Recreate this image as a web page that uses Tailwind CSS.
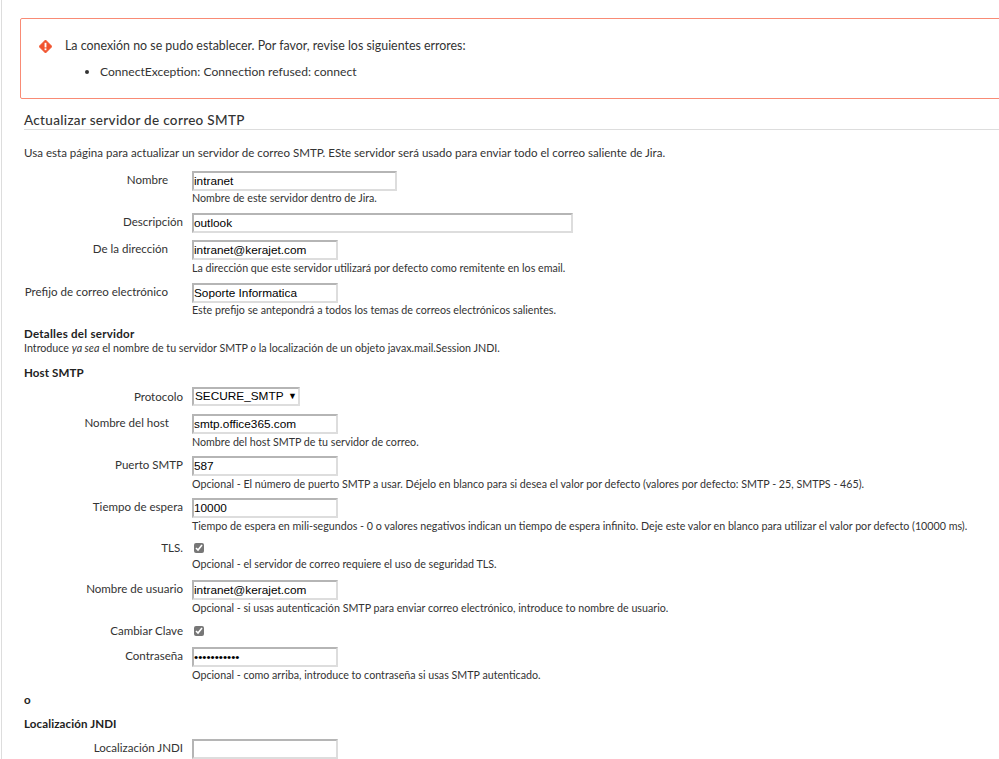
<!DOCTYPE html>
<html lang="es">
<head>
    <meta charset="UTF-8">
    <title>Actualizar servidor de correo SMTP</title>
    <script src="https://cdn.jsdelivr.net/npm/@tailwindcss/browser@4"></script>
</head>
<body class="bg-white overflow-hidden h-[759px] font-['Lato',sans-serif] text-[11.55px] text-[#333]">
<div class="ml-[1px] border-l border-[#ddd] h-[759px] pl-[18px] pt-[18px] overflow-hidden">
    <!-- Error -->
    <div class="w-[1000px] h-[81px] border border-[#f98b75] rounded-[2px] pl-[18px] pt-[17px] text-[12.4px]">
        <div class="flex items-center h-[20px]">
            <svg class="w-[13px] h-[13px] mr-[13px]" viewBox="0 0 14 14"><path d="M7 0 L14 7 L7 14 L0 7 Z" fill="#f1532e" stroke="#f1532e" stroke-linejoin="round"/><rect x="6" y="3" width="2" height="5" fill="#fff"/><rect x="6" y="9" width="2" height="2" fill="#fff"/></svg>
            <span>La conexión no se pudo establecer. Por favor, revise los siguientes errores:</span>
        </div>
        <ul class="list-disc ml-[61px] mt-[7px] text-[12.1px]"><li>ConnectException: Connection refused: connect</li></ul>
    </div>

    <div class="ml-[4px]">
        <h2 class="mt-[12px] h-[19px] border-b border-[#ddd] text-[13.5px] font-medium tracking-[0.32px] leading-[19px] text-[#333]">Actualizar servidor de correo SMTP</h2>
        <p class="mt-[14px] h-[18px] leading-[18px] whitespace-nowrap">Usa esta página para actualizar un servidor de correo SMTP. ESte servidor será usado para enviar todo el correo saliente de Jira.</p>

        <!-- Nombre -->
        <div class="mt-[9px] flex items-center h-[20px]">
            <label class="w-[168px] text-right pr-[24px] pb-[2px] shrink-0">Nombre</label>
            <input class="w-[205px] h-[20px] border-2 border-[#b5b5b5] border-r-[#ddd] border-b-[#ddd] text-[11.8px] font-['Liberation_Sans'] text-black" value="intranet">
        </div>
        <p class="ml-[168px] text-[10.7px] leading-[14px] h-[14px]">Nombre de este servidor dentro de Jira.</p>

        <div class="mt-[8px] flex items-center h-[20px]">
            <label class="w-[168px] text-right pr-[9px] pb-[3px] shrink-0 whitespace-nowrap">Descripción</label>
            <input class="w-[381px] h-[20px] border-2 border-[#b5b5b5] border-r-[#ddd] border-b-[#ddd] text-[11.8px] font-['Liberation_Sans'] text-black" value="outlook">
        </div>

        <div class="mt-[7px] flex items-center h-[20px]">
            <label class="w-[168px] text-right pr-[24px] pb-[2px] shrink-0 whitespace-nowrap">De la dirección</label>
            <input class="w-[146px] h-[20px] border-2 border-[#b5b5b5] border-r-[#ddd] border-b-[#ddd] text-[11.8px] font-['Liberation_Sans'] text-black" value="intranet@kerajet.com">
        </div>
        <p class="ml-[168px] text-[10.7px] leading-[14px] h-[14px] mt-[1px] whitespace-nowrap">La dirección que este servidor utilizará por defecto como remitente en los email.</p>

        <div class="mt-[8px] flex items-center h-[20px]">
            <label class="w-[168px] text-right pr-[24px] pb-[3px] shrink-0 whitespace-nowrap">Prefijo de correo electrónico</label>
            <input class="w-[146px] h-[20px] border-2 border-[#b5b5b5] border-r-[#ddd] border-b-[#ddd] text-[11.8px] font-['Liberation_Sans'] text-black" value="Soporte Informatica">
        </div>
        <p class="ml-[168px] text-[10.7px] leading-[14px] h-[14px] whitespace-nowrap">Este prefijo se antepondrá a todos los temas de correos electrónicos salientes.</p>

        <h3 class="mt-[9px] font-bold tracking-[0.25px] text-[#222] leading-[16px]">Detalles del servidor</h3>
        <p class="-mt-[1px] text-[10.7px] leading-[14px] whitespace-nowrap">Introduce <em>ya sea</em> el nombre de tu servidor SMTP <em>o</em> la localización de un objeto javax.mail.Session JNDI.</p>
        <h3 class="mt-[10px] font-bold tracking-[0.1px] text-[#222] leading-[16px]">Host SMTP</h3>

        <div class="mt-[6px] flex items-center h-[19px]">
            <label class="w-[168px] text-right pr-[9px] shrink-0">Protocolo</label>
            <div class="flex justify-between w-[108px] h-[19px] border-2 border-[#b5b5b5] border-r-[#ddd] border-b-[#ddd] pl-[1px] pr-[1px] text-[11.8px] leading-[15px] font-['Liberation_Sans'] text-black whitespace-nowrap"><span>SECURE_SMTP</span><span class="text-[9px]">▼</span></div>
        </div>

        <div class="mt-[8px] flex items-center h-[20px]">
            <label class="w-[168px] text-right pr-[23px] pb-[3px] shrink-0">Nombre del host</label>
            <input class="w-[146px] h-[20px] border-2 border-[#b5b5b5] border-r-[#ddd] border-b-[#ddd] text-[11.8px] font-['Liberation_Sans'] text-black" value="smtp.office365.com">
        </div>
        <p class="ml-[168px] text-[10.7px] leading-[14px] h-[14px] mt-[1px] whitespace-nowrap">Nombre del host SMTP de tu servidor de correo.</p>

        <div class="mt-[7px] flex items-center h-[20px]">
            <label class="w-[168px] text-right pr-[9px] pb-[3px] shrink-0">Puerto SMTP</label>
            <input class="w-[146px] h-[20px] border-2 border-[#b5b5b5] border-r-[#ddd] border-b-[#ddd] text-[11.8px] font-['Liberation_Sans'] text-black" value="587">
        </div>
        <p class="ml-[168px] text-[10.7px] leading-[14px] h-[14px] mt-[1px] whitespace-nowrap">Opcional - El número de puerto SMTP a usar. Déjelo en blanco para si desea el valor por defecto (valores por defecto: SMTP - 25, SMTPS - 465).</p>

        <div class="mt-[7px] flex items-center h-[20px]">
            <label class="w-[168px] text-right pr-[9px] pb-[3px] shrink-0">Tiempo de espera</label>
            <input class="w-[146px] h-[20px] border-2 border-[#b5b5b5] border-r-[#ddd] border-b-[#ddd] text-[11.8px] font-['Liberation_Sans'] text-black" value="10000">
        </div>
        <p class="ml-[168px] text-[10.7px] leading-[14px] h-[14px] mt-[1px] whitespace-nowrap">Tiempo de espera en mili-segundos - 0 o valores negativos indican un tiempo de espera infinito. Deje este valor en blanco para utilizar el valor por defecto (10000 ms).</p>

        <div class="mt-[7px] flex items-center h-[16px]">
            <label class="w-[168px] text-right pr-[9px] shrink-0">TLS.</label>
            <input type="checkbox" checked class="ml-[2px] w-[10px] h-[10px] accent-[#777]">
        </div>
        <p class="ml-[168px] text-[10.7px] leading-[14px] h-[14px] mt-[1px] whitespace-nowrap">Opcional - el servidor de correo requiere el uso de seguridad TLS.</p>

        <div class="mt-[9px] flex items-center h-[20px]">
            <label class="w-[168px] text-right pr-[9px] pb-[2px] shrink-0">Nombre de usuario</label>
            <input class="w-[146px] h-[20px] border-2 border-[#b5b5b5] border-r-[#ddd] border-b-[#ddd] text-[11.8px] font-['Liberation_Sans'] text-black" value="intranet@kerajet.com">
        </div>
        <p class="ml-[168px] text-[10.7px] leading-[14px] h-[14px] mt-[1px] whitespace-nowrap">Opcional - si usas autenticación SMTP para enviar correo electrónico, introduce to nombre de usuario.</p>

        <div class="mt-[8px] flex items-center h-[16px]">
            <label class="w-[168px] text-right pr-[9px] shrink-0">Cambiar Clave</label>
            <input type="checkbox" checked class="ml-[2px] w-[10px] h-[10px] accent-[#777]">
        </div>

        <div class="mt-[8px] flex items-center h-[20px]">
            <label class="w-[168px] text-right pr-[9px] pb-[2px] shrink-0">Contraseña</label>
            <input type="password" class="w-[146px] h-[20px] border-2 border-[#b5b5b5] border-r-[#ddd] border-b-[#ddd] text-[11.8px] font-['Liberation_Sans'] text-black" value="xxxxxxxxxxx">
        </div>
        <p class="ml-[168px] text-[10.7px] leading-[14px] h-[14px] mt-[1px] whitespace-nowrap">Opcional - como arriba, introduce to contraseña si usas SMTP autenticado.</p>

        <h3 class="mt-[10px] font-bold text-[#222] leading-[16px]">o</h3>
        <h3 class="mt-[8px] font-bold tracking-[0.1px] text-[#222] leading-[16px]">Localización JNDI</h3>
        <div class="mt-[7px] flex items-center h-[20px]">
            <label class="w-[168px] text-right pr-[9px] pb-[3px] shrink-0">Localización JNDI</label>
            <input class="w-[146px] h-[20px] border-2 border-[#b5b5b5] border-r-[#ddd] border-b-[#ddd] text-[11.8px] font-['Liberation_Sans'] text-black">
        </div>
    </div>
</div>
</body>
</html>
